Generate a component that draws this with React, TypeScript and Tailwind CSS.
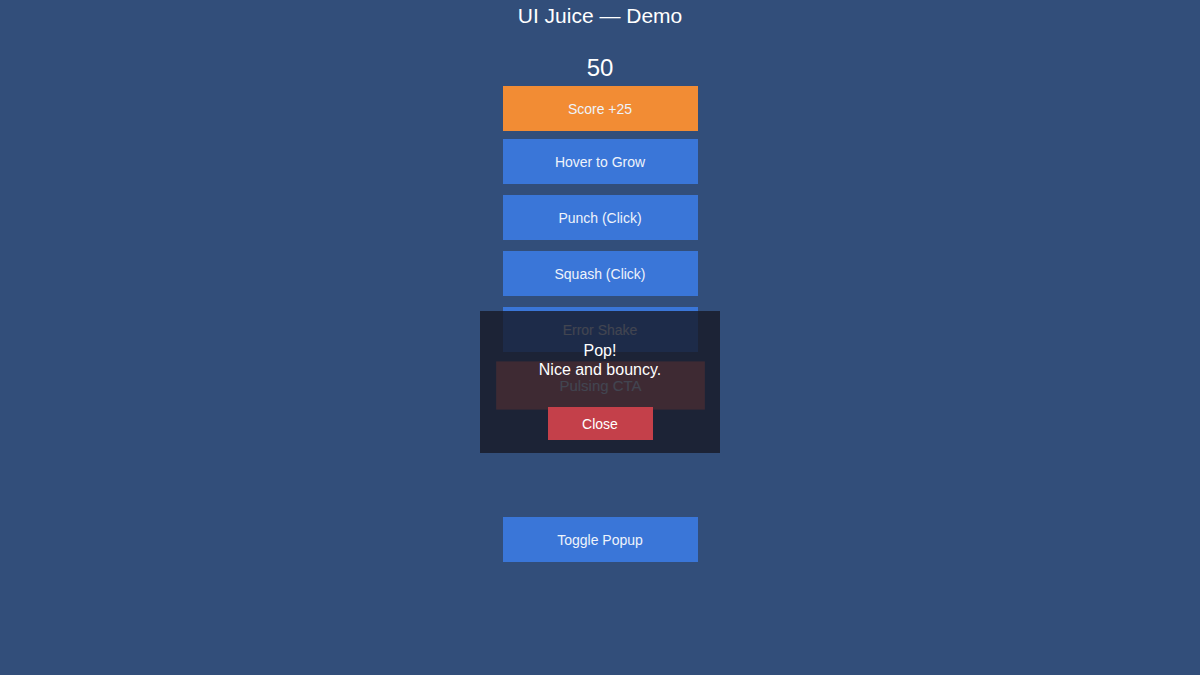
import React from "react";

const btn =
  "flex h-[45px] w-[195px] items-center justify-center pt-[2px] text-[14px] text-[#eef3fb]";

export default function App() {
  return (
    <div
      className="relative flex h-[675px] w-full flex-col items-center bg-[#324e7a] text-white"
      style={{ fontFamily: '"Liberation Sans", Arial, sans-serif' }}
    >
      <h1 className="mt-[3px] text-[21px] leading-[26px]">UI Juice — Demo</h1>
      <div className="mt-[25px] text-[24px] leading-[28px]">50</div>

      <div className="mt-[4px] flex flex-col items-center">
        <button className={`${btn} bg-[#f28c34]`}>Score +25</button>
        <button className={`${btn} mt-[8px] bg-[#3a76d8]`}>Hover to Grow</button>
        <button className={`${btn} mt-[11px] bg-[#3a76d8]`}>Punch (Click)</button>
        <button className={`${btn} mt-[11px] bg-[#3a76d8]`}>Squash (Click)</button>
        <button className={`${btn} mt-[11px] bg-[#3a76d8]`}>Error Shake</button>
        <button
          className={`${btn} mt-[11px] scale-x-[1.07] scale-y-[1.07] bg-[#dc6e6b]`}
        >
          Pulsing CTA
        </button>
        <button className={`${btn} mt-[109px] bg-[#3a76d8]`}>Toggle Popup</button>
      </div>

      {/* popup */}
      <div className="absolute left-1/2 top-[311px] flex h-[142px] w-[240px] -translate-x-1/2 flex-col items-center bg-[#161925]/80 pt-[30px]">
        <div className="text-center text-[16px] leading-[19px] text-white">
          <div>Pop!</div>
          <div>Nice and bouncy.</div>
        </div>
        <button className="mt-[28px] flex h-[33px] w-[105px] items-center justify-center pt-[1px] text-[14px] text-white bg-[#c4404a]">
          Close
        </button>
      </div>
    </div>
  );
}
